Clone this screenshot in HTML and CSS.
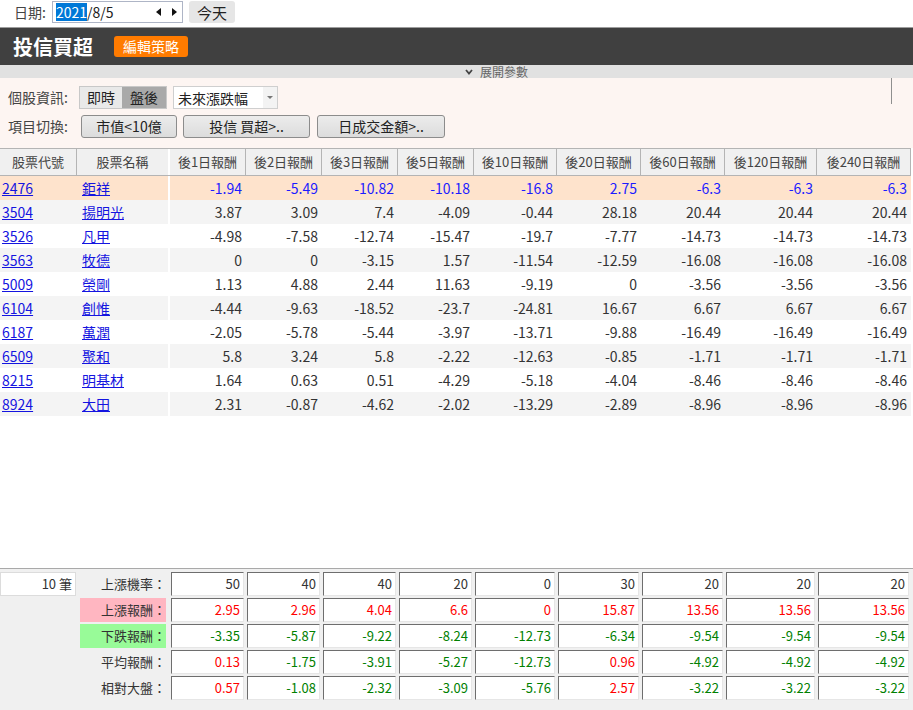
FILE: index.html
```html
<!DOCTYPE html>
<html lang="zh-Hant">
<head>
<meta charset="utf-8">
<title>投信買超</title>
<link rel="stylesheet" href="styles.css">
</head>
<body>
<div class="page">
  <div class="datebar">
    <span class="date-label">日期:</span>
    <div class="date-input">
      <span class="sel">2021</span><span>/8/5</span>
      <span class="spin">
        <svg width="5" height="8" viewBox="0 0 5 8"><polygon points="5,0 5,8 0,4" fill="#111"/></svg>
        <svg width="5" height="8" viewBox="0 0 5 8"><polygon points="0,0 0,8 5,4" fill="#111"/></svg>
      </span>
    </div>
    <button class="today">今天</button>
  </div>

  <div class="titlebar">
    <h1 class="title">投信買超</h1>
    <button class="edit">編輯策略</button>
  </div>

  <div class="expand">
    <svg class="chev" width="8" height="6" viewBox="0 0 8 6"><polyline points="1,1 4,4.5 7,1" fill="none" stroke="#444" stroke-width="1.8"/></svg>
    <span>展開參數</span>
  </div>

  <div class="controls">
    <div class="ctrl-row">
      <span class="ctrl-label">個股資訊:</span>
      <div class="toggle"><span class="tg">即時</span><span class="tg on">盤後</span></div>
      <div class="select"><span>未來漲跌幅</span><span class="caret"><svg width="6" height="3" viewBox="0 0 6 3"><polygon points="0,0 6,0 3,3" fill="#777"/></svg></span></div>
      <span class="divider"></span>
    </div>
    <div class="ctrl-row">
      <span class="ctrl-label">項目切換:</span>
      <button class="opt o1">市值&lt;10億</button>
      <button class="opt o2">投信 買超&gt;..</button>
      <button class="opt o3">日成交金額&gt;..</button>
    </div>
  </div>

  <div class="tbl">
    <div class="thead">
      <div class="th">股票代號</div>
      <div class="th name">股票名稱</div>
      <div class="th">後1日報酬</div>
      <div class="th">後2日報酬</div>
      <div class="th">後3日報酬</div>
      <div class="th">後5日報酬</div>
      <div class="th">後10日報酬</div>
      <div class="th">後20日報酬</div>
      <div class="th">後60日報酬</div>
      <div class="th">後120日報酬</div>
      <div class="th">後240日報酬</div>
    </div>
    <div class="tr hl"><a class="td code" href="#">2476</a><div class="td name"><a href="#">鉅祥</a></div><div class="td num">-1.94</div><div class="td num">-5.49</div><div class="td num">-10.82</div><div class="td num">-10.18</div><div class="td num">-16.8</div><div class="td num">2.75</div><div class="td num">-6.3</div><div class="td num">-6.3</div><div class="td num">-6.3</div></div>
    <div class="tr alt"><a class="td code" href="#">3504</a><div class="td name"><a href="#">揚明光</a></div><div class="td num">3.87</div><div class="td num">3.09</div><div class="td num">7.4</div><div class="td num">-4.09</div><div class="td num">-0.44</div><div class="td num">28.18</div><div class="td num">20.44</div><div class="td num">20.44</div><div class="td num">20.44</div></div>
    <div class="tr"><a class="td code" href="#">3526</a><div class="td name"><a href="#">凡甲</a></div><div class="td num">-4.98</div><div class="td num">-7.58</div><div class="td num">-12.74</div><div class="td num">-15.47</div><div class="td num">-19.7</div><div class="td num">-7.77</div><div class="td num">-14.73</div><div class="td num">-14.73</div><div class="td num">-14.73</div></div>
    <div class="tr alt"><a class="td code" href="#">3563</a><div class="td name"><a href="#">牧德</a></div><div class="td num">0</div><div class="td num">0</div><div class="td num">-3.15</div><div class="td num">1.57</div><div class="td num">-11.54</div><div class="td num">-12.59</div><div class="td num">-16.08</div><div class="td num">-16.08</div><div class="td num">-16.08</div></div>
    <div class="tr"><a class="td code" href="#">5009</a><div class="td name"><a href="#">榮剛</a></div><div class="td num">1.13</div><div class="td num">4.88</div><div class="td num">2.44</div><div class="td num">11.63</div><div class="td num">-9.19</div><div class="td num">0</div><div class="td num">-3.56</div><div class="td num">-3.56</div><div class="td num">-3.56</div></div>
    <div class="tr alt"><a class="td code" href="#">6104</a><div class="td name"><a href="#">創惟</a></div><div class="td num">-4.44</div><div class="td num">-9.63</div><div class="td num">-18.52</div><div class="td num">-23.7</div><div class="td num">-24.81</div><div class="td num">16.67</div><div class="td num">6.67</div><div class="td num">6.67</div><div class="td num">6.67</div></div>
    <div class="tr"><a class="td code" href="#">6187</a><div class="td name"><a href="#">萬潤</a></div><div class="td num">-2.05</div><div class="td num">-5.78</div><div class="td num">-5.44</div><div class="td num">-3.97</div><div class="td num">-13.71</div><div class="td num">-9.88</div><div class="td num">-16.49</div><div class="td num">-16.49</div><div class="td num">-16.49</div></div>
    <div class="tr alt"><a class="td code" href="#">6509</a><div class="td name"><a href="#">聚和</a></div><div class="td num">5.8</div><div class="td num">3.24</div><div class="td num">5.8</div><div class="td num">-2.22</div><div class="td num">-12.63</div><div class="td num">-0.85</div><div class="td num">-1.71</div><div class="td num">-1.71</div><div class="td num">-1.71</div></div>
    <div class="tr"><a class="td code" href="#">8215</a><div class="td name"><a href="#">明基材</a></div><div class="td num">1.64</div><div class="td num">0.63</div><div class="td num">0.51</div><div class="td num">-4.29</div><div class="td num">-5.18</div><div class="td num">-4.04</div><div class="td num">-8.46</div><div class="td num">-8.46</div><div class="td num">-8.46</div></div>
    <div class="tr alt"><a class="td code" href="#">8924</a><div class="td name"><a href="#">大田</a></div><div class="td num">2.31</div><div class="td num">-0.87</div><div class="td num">-4.62</div><div class="td num">-2.02</div><div class="td num">-13.29</div><div class="td num">-2.89</div><div class="td num">-8.96</div><div class="td num">-8.96</div><div class="td num">-8.96</div></div>
  </div>

  <div class="summary">
    <div class="count">10 筆</div>
    <div class="lbl">上漲機率：</div>
    <div class="val">50</div><div class="val">40</div><div class="val">40</div><div class="val">20</div><div class="val">0</div><div class="val">30</div><div class="val">20</div><div class="val">20</div><div class="val">20</div>

    <div class="lbl up">上漲報酬：</div>
    <div class="val pos">2.95</div><div class="val pos">2.96</div><div class="val pos">4.04</div><div class="val pos">6.6</div><div class="val pos">0</div><div class="val pos">15.87</div><div class="val pos">13.56</div><div class="val pos">13.56</div><div class="val pos">13.56</div>

    <div class="lbl down">下跌報酬：</div>
    <div class="val neg">-3.35</div><div class="val neg">-5.87</div><div class="val neg">-9.22</div><div class="val neg">-8.24</div><div class="val neg">-12.73</div><div class="val neg">-6.34</div><div class="val neg">-9.54</div><div class="val neg">-9.54</div><div class="val neg">-9.54</div>

    <div class="lbl">平均報酬：</div>
    <div class="val pos">0.13</div><div class="val neg">-1.75</div><div class="val neg">-3.91</div><div class="val neg">-5.27</div><div class="val neg">-12.73</div><div class="val pos">0.96</div><div class="val neg">-4.92</div><div class="val neg">-4.92</div><div class="val neg">-4.92</div>

    <div class="lbl">相對大盤：</div>
    <div class="val pos">0.57</div><div class="val neg">-1.08</div><div class="val neg">-2.32</div><div class="val neg">-3.09</div><div class="val neg">-5.76</div><div class="val pos">2.57</div><div class="val neg">-3.22</div><div class="val neg">-3.22</div><div class="val neg">-3.22</div>
  </div>
</div>
</body>
</html>
```
FILE: styles.css
```css
* { box-sizing: border-box; }
html, body { margin: 0; padding: 0; }
body {
  font-family: "Noto Sans CJK TC", "Noto Sans", sans-serif;
  color: #333;
  background: #fff;
  --cols: 77px 93px 76px 76px 76px 76px 83px 84px 84px 92px 94px;
}
button { font-family: inherit; cursor: pointer; }

.page {
  height: 100vh;
  display: flex;
  flex-direction: column;
}

/* date bar */
.datebar {
  height: 27px;
  flex: none;
  display: flex;
  align-items: flex-start;
  padding: 1px 0 0 14px;
}
.date-label {
  font-size: 14px;
  line-height: 22px;
  color: #444;
  margin-right: 6px;
}
.date-input {
  width: 131px;
  height: 22px;
  border: 1px solid #aeb5c6;
  display: flex;
  align-items: center;
  padding-left: 3px;
  font-size: 14px;
  line-height: 18px;
  color: #222;
}
.date-input .sel { background: #0078d7; color: #fff; }
.spin {
  margin-left: auto;
  margin-right: 5px;
  display: flex;
  gap: 11px;
}
.spin svg { display: block; }
.today {
  margin-left: 6px;
  width: 46px;
  height: 22px;
  border: none;
  border-radius: 3px;
  background: #e6e6e6;
  font-size: 15px;
  color: #222;
  padding: 0;
}

/* title bar */
.titlebar {
  height: 38px;
  flex: none;
  border-top: 1px solid #9d9d9d;
  background: #404040;
  display: flex;
  align-items: center;
  padding-left: 13px;
}
.title {
  margin: 0;
  font-size: 20px;
  font-weight: bold;
  color: #fff;
  line-height: 1;
}
.edit {
  margin-left: 21px;
  height: 21px;
  padding: 0 9px;
  border: none;
  border-radius: 3px;
  background: #ff7b00;
  color: #fff;
  font-size: 14px;
  line-height: 21px;
}

/* expand */
.expand {
  height: 13px;
  flex: none;
  background: #e1e1e1;
  display: flex;
  align-items: center;
  padding-left: 465px;
  font-size: 12px;
  line-height: 13px;
  color: #666;
}
.chev { margin-right: 7px; display: block; }

/* controls */
.controls {
  flex: none;
  background: #fdf5f2;
  padding: 8px 0 10px 8px;
  display: flex;
  flex-direction: column;
  gap: 6px;
}
.ctrl-row {
  height: 23px;
  display: flex;
  align-items: center;
}
.ctrl-label {
  width: 71px;
  font-size: 14px;
  color: #444;
  line-height: 23px;
}
.toggle {
  display: flex;
  height: 23px;
  border: 1px solid #c8c8c8;
}
.tg {
  font-size: 14px;
  line-height: 21px;
  padding: 0 7px;
  background: #e9e9e9;
  color: #222;
}
.tg.on { background: #a9a9a9; padding: 0 8px; }
.select {
  margin-left: 6px;
  width: 105px;
  height: 23px;
  border: 1px solid #cfcfcf;
  background: #fff;
  display: flex;
  align-items: center;
  padding-left: 4px;
  font-size: 14px;
  color: #222;
}
.caret {
  margin-left: auto;
  width: 14px;
  height: 21px;
  background: #f3f3f3;
  display: flex;
  align-items: center;
  justify-content: center;
}
.caret svg { display: block; }
.divider {
  align-self: flex-start;
  margin: -8px 21px 0 auto;
  width: 1px;
  height: 26px;
  background: #8f8f8f;
}
.opt {
  height: 23px;
  border: 1px solid #8c8c8c;
  border-radius: 3px;
  background: linear-gradient(#ececec, #dcdcdc);
  font-size: 14px;
  color: #222;
  padding: 0;
  line-height: 21px;
}
.o1 { margin-left: 2px; width: 96px; }
.o2 { margin-left: 6px; width: 127px; }
.o3 { margin-left: 7px; width: 128px; }

/* table */
.tbl { width: 911px; flex: none; }
.thead {
  display: grid;
  grid-template-columns: var(--cols);
  height: 28px;
  background: #f0f0f0;
  border-top: 1px solid #b4b4b4;
  border-bottom: 1px solid #b4b4b4;
}
.th {
  border-right: 1px solid #b4b4b4;
  text-align: center;
  font-size: 13px;
  line-height: 26px;
  color: #444;
  white-space: nowrap;
}
.thead .name { border-right: 2px solid #fff; }
.tr {
  display: grid;
  grid-template-columns: var(--cols);
  height: 24px;
  background: #fff;
}
.tr.alt { background: #f4f4f4; }
.tr.hl { background: #fee3cc; }
.td {
  font-size: 14px;
  line-height: 24px;
  white-space: nowrap;
  overflow: hidden;
}
.td.code { padding-left: 2px; color: #1414e0; text-decoration: underline; }
.td.name { padding-left: 5px; border-right: 2px solid #fff; }
.td.name a { color: #1414e0; text-decoration: underline; }
.td.num { text-align: right; padding-right: 4px; color: #333; }
.tr.hl .td.num { color: #1c1cff; }

/* summary */
.summary {
  margin-top: auto;
  flex: none;
  height: 142px;
  border-top: 1px solid #a9a9a9;
  background: #f0f0f0;
  padding-top: 3px;
  display: grid;
  grid-template-columns: var(--cols);
  grid-auto-rows: 24px;
  row-gap: 2px;
  align-content: start;
}
.count {
  margin-right: 1px;
  background: #fff;
  border: 1px solid #dcdcdc;
  text-align: right;
  padding-right: 3px;
  font-size: 13px;
  line-height: 22px;
  color: #333;
}
.lbl {
  grid-column: 2;
  margin: 0 4px 0 3px;
  text-align: right;
  font-size: 13px;
  line-height: 24px;
  color: #333;
}
.lbl.up { background: #ffb6c1; }
.lbl.down { background: #98fb98; }
.val {
  margin: 0 2px 0 1px;
  background: #fff;
  border-top: 1px solid #6e6e6e;
  border-left: 1px solid #6e6e6e;
  border-right: 1px solid #e6e6e6;
  border-bottom: 1px solid #e6e6e6;
  text-align: right;
  padding-right: 3px;
  font-size: 13px;
  line-height: 22px;
  color: #333;
}
.val.pos { color: #ff0000; }
.val.neg { color: #008000; }
```
